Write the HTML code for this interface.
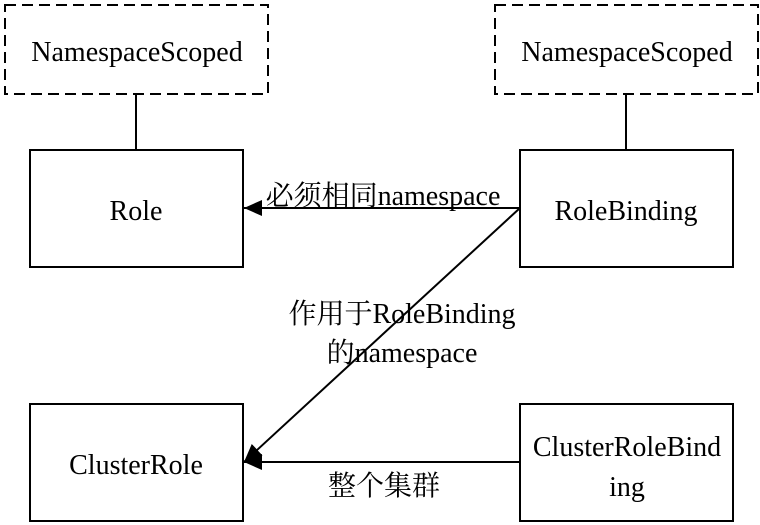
<!DOCTYPE html>
<html><head><meta charset="utf-8"><style>
html,body{margin:0;padding:0;background:#fff;width:760px;height:525px;overflow:hidden}
svg{display:block}
text{font-family:"Liberation Serif","Noto Serif CJK SC",serif;font-size:28px;fill:#000}
</style></head><body>
<svg width="760" height="525" viewBox="0 0 760 525">
<defs><marker id="b" markerWidth="20" markerHeight="20" refX="18" refY="8" orient="auto" markerUnits="userSpaceOnUse"><path d="M0,0 L18,8 L0,16 Z" fill="#000"/></marker></defs>
<g fill="none" stroke="#000" stroke-width="2">
<rect x="5" y="5" width="263" height="89" stroke-dasharray="11,6"/>
<rect x="495" y="5" width="263" height="89" stroke-dasharray="11,6"/>
<line x1="136" y1="94" x2="136" y2="150"/>
<line x1="626" y1="94" x2="626" y2="150"/>
<rect x="30" y="150" width="213" height="117"/>
<rect x="520" y="150" width="213" height="117"/>
<rect x="30" y="404" width="213" height="117"/>
<rect x="520" y="404" width="213" height="117"/>
<line x1="520" y1="208" x2="244" y2="208" marker-end="url(#b)"/>
<line x1="520" y1="208" x2="244" y2="462" marker-end="url(#b)"/>
<line x1="520" y1="462" x2="244" y2="462" marker-end="url(#b)"/>
</g>
<text x="137" y="61" text-anchor="middle">NamespaceScoped</text>
<text x="627" y="61" text-anchor="middle">NamespaceScoped</text>
<text x="136" y="220" text-anchor="middle">Role</text>
<text x="626" y="220" text-anchor="middle">RoleBinding</text>
<text x="136" y="474" text-anchor="middle">ClusterRole</text>
<text x="627" y="456" text-anchor="middle">ClusterRoleBind</text>
<text x="627" y="496" text-anchor="middle">ing</text>
<text x="383" y="205" text-anchor="middle">必须相同namespace</text>
<text x="402" y="323" text-anchor="middle">作用于RoleBinding</text>
<text x="402" y="362" text-anchor="middle">的namespace</text>
<text x="384" y="495" text-anchor="middle">整个集群</text>
</svg>
</body></html>
